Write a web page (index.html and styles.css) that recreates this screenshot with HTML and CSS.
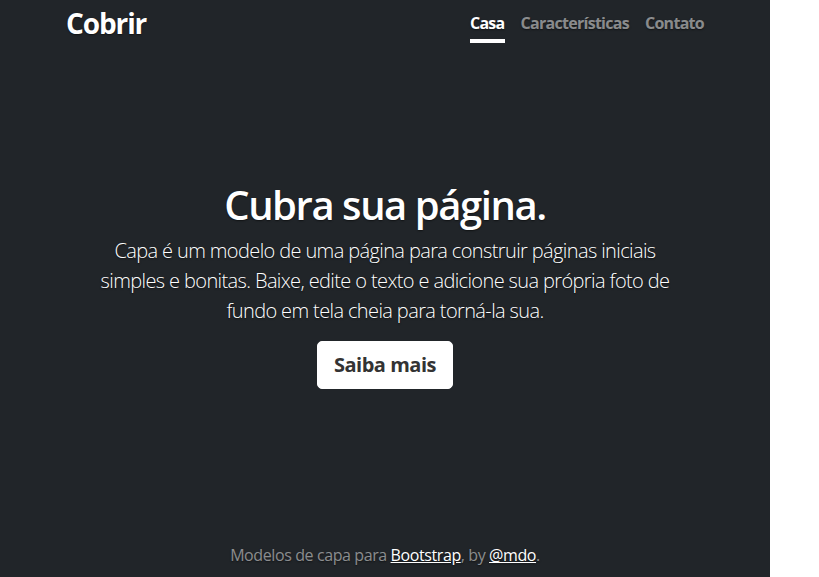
FILE: index.html
```html
<!DOCTYPE html>
<html lang="pt">
<head>
<meta charset="utf-8">
<title>Cobrir</title>
<link rel="stylesheet" href="styles.css">
</head>
<body>
<div class="page">
  <div class="cover">
    <header class="masthead">
      <h3 class="brand">Cobrir</h3>
      <nav class="nav">
        <a class="nav-link active" href="#">Casa</a>
        <a class="nav-link" href="#">Características</a>
        <a class="nav-link" href="#">Contato</a>
      </nav>
    </header>
    <main class="hero">
      <h1 class="hero-title">Cubra sua página.</h1>
      <p class="lead">Capa é um modelo de uma página para construir páginas iniciais simples e bonitas. Baixe, edite o texto e adicione sua própria foto de fundo em tela cheia para torná-la sua.</p>
      <p class="cta"><a href="#" class="btn">Saiba mais</a></p>
    </main>
    <footer class="footer">
      <p>Modelos de capa para <a href="#">Bootstrap</a>, by <a href="#">@mdo</a>.</p>
    </footer>
  </div>
</div>
</body>
</html>
```
FILE: styles.css
```css
html, body { margin: 0; padding: 0; background: #fff; }
body { font-family: "Open Sans", "Noto Sans", sans-serif; letter-spacing: -0.03em; }
.page {
  width: 770px;
  height: 577px;
  background: #212529;
  color: #fff;
  text-shadow: 0 0.05rem 0.1rem rgba(0,0,0,.5);
  text-align: center;
}
.cover {
  max-width: 672px;
  height: 100%;
  margin: 0 auto;
  padding: 7px 16px 10px;
  box-sizing: border-box;
  display: flex;
  flex-direction: column;
}
.masthead {
  display: flex;
  justify-content: space-between;
  align-items: flex-start;
  margin-bottom: auto;
}
.brand {
  margin: 0 0 0 1px;
  font-size: 28px;
  font-weight: 700;
  line-height: 1.2;
  letter-spacing: -0.04em;
}
.nav { display: flex; margin-right: 1px; }
.nav-link {
  color: rgba(255,255,255,.5);
  text-decoration: none;
  font-weight: 700;
  font-size: 16px;
  line-height: 24px;
  padding: 4px 0;
  border-bottom: 4px solid transparent;
  letter-spacing: -0.045em;
}
.nav-link + .nav-link { margin-left: 16px; }
.nav-link.active { color: #fff; border-bottom-color: #fff; }
.hero { padding: 0 16px; }
.hero-title {
  margin: 0 0 7px;
  font-size: 40px;
  font-weight: 600;
  line-height: 1.2;
  letter-spacing: -0.036em;
}
.lead {
  margin: 0 0 15px;
  font-size: 20px;
  font-weight: 300;
  line-height: 1.5;
  letter-spacing: -0.031em;
}
.cta { margin: 0 0 16px; }
.btn {
  display: inline-block;
  background: #fff;
  color: #333;
  text-shadow: none;
  text-decoration: none;
  font-weight: 700;
  font-size: 20px;
  line-height: 1.5;
  padding: 8px 16px;
  border: 1px solid #fff;
  border-radius: 5px;
}
.footer { margin-top: auto; color: rgba(255,255,255,.5); font-size: 16px; line-height: 24px; letter-spacing: -0.025em; }
.footer p { margin: 0; }
.footer a { color: #fff; }
```
